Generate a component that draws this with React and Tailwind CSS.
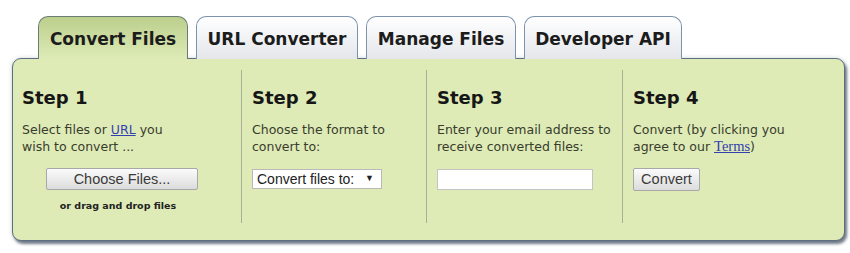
import React from "react";

const tabs = [
  { label: "Convert Files", width: "w-[150px]", active: true },
  { label: "URL Converter", width: "w-[162px]" },
  { label: "Manage Files", width: "w-[150px]" },
  { label: "Developer API", width: "w-[158px]" },
];

const App = () => {
  return (
    <div className="h-[253px] w-[850px] bg-white pt-[16px] pl-[12px] pr-[5px] font-['DejaVu_Sans',sans-serif]">
      {/* Tab strip */}
      <div className="flex gap-2 pl-[26px]">
        {tabs.map((tab) => (
          <div
            key={tab.label}
            className={`${tab.width} relative z-10 -mb-px flex h-[43px] items-center justify-center rounded-t-[10px] border border-b-0 pt-[4px] text-[17px] font-bold text-[#1c1c1c] ${
              tab.active
                ? "border-[#6b7c74] bg-gradient-to-b from-[#bccf8c] to-[#deebb7]"
                : "border-[#7d93ad] bg-gradient-to-b from-white to-[#e4e6ea]"
            }`}
          >
            {tab.label}
          </div>
        ))}
      </div>

      {/* Panel */}
      <div className="flex h-[183px] rounded-[9px] border border-[#5d6e80] bg-[#deebb7] pt-[11px] pb-[17px] shadow-[2px_3px_3px_rgba(70,82,100,0.75),0_0_4px_rgba(70,82,100,0.25)]">
        {/* Step 1 */}
        <div className="w-[229px] border-r border-[#a9b096] pl-[9px] pt-[16px]">
          <h2 className="text-[18px] leading-[24px] font-bold text-[#161616]">Step 1</h2>
          <p className="mt-[11px] text-[12.5px] leading-[17px] text-[#383c2c]">
            Select files or{" "}
            <a className="text-[#3440b0] underline">URL</a> you
            <br />
            wish to convert ...
          </p>
          <div className="flex w-[200px] flex-col items-center">
            <button className="mt-[13px] h-[22px] w-[152px] rounded-[2px] border border-[#a8a8a8] bg-gradient-to-b from-[#fbfbfb] to-[#dcdcdc] font-['Liberation_Sans',sans-serif] text-[14.5px] text-[#3a3a3a]">
              Choose Files...
            </button>
            <span className="mt-[9px] mr-[8px] text-[9.5px] font-bold text-[#222]">or drag and drop files</span>
          </div>
        </div>

        {/* Step 2 */}
        <div className="w-[185px] border-r border-[#a9b096] pl-[10px] pt-[16px]">
          <h2 className="text-[18px] leading-[24px] font-bold text-[#161616]">Step 2</h2>
          <p className="mt-[11px] text-[12.5px] leading-[17px] text-[#383c2c]">
            Choose the format to
            <br />
            convert to:
          </p>
          <div className="mt-[14px] flex h-[20px] w-[130px] items-center justify-between border border-[#b9b9b9] bg-white pl-[4px] pr-[7px] font-['Liberation_Sans',sans-serif] text-[14px] text-[#222]">
            <span>Convert files to:</span>
            <span className="text-[9px]">▼</span>
          </div>
        </div>

        {/* Step 3 */}
        <div className="w-[196px] border-r border-[#a9b096] pl-[10px] pt-[16px]">
          <h2 className="text-[18px] leading-[24px] font-bold text-[#161616]">Step 3</h2>
          <p className="mt-[11px] text-[12.5px] leading-[17px] text-[#383c2c]">
            Enter your email address to
            <br />
            receive converted files:
          </p>
          <input
            type="text"
            className="mt-[14px] h-[21px] w-[156px] border border-[#c4c4c4] bg-white outline-none"
          />
        </div>

        {/* Step 4 */}
        <div className="flex-1 pl-[10px] pt-[16px]">
          <h2 className="text-[18px] leading-[24px] font-bold text-[#161616]">Step 4</h2>
          <p className="mt-[11px] text-[12.5px] leading-[17px] text-[#383c2c]">
            Convert (by clicking you
            <br />
            agree to our{" "}
            <a className="font-['Liberation_Serif',serif] text-[14.5px] leading-[17px] text-[#3440b0] underline">Terms</a>)
          </p>
          <button className="mt-[13px] h-[23px] w-[67px] rounded-[2px] border border-[#a8a8a8] bg-gradient-to-b from-[#fbfbfb] to-[#dcdcdc] font-['Liberation_Sans',sans-serif] text-[14.5px] text-[#3a3a3a]">
            Convert
          </button>
        </div>
      </div>
    </div>
  );
};

export default App;
